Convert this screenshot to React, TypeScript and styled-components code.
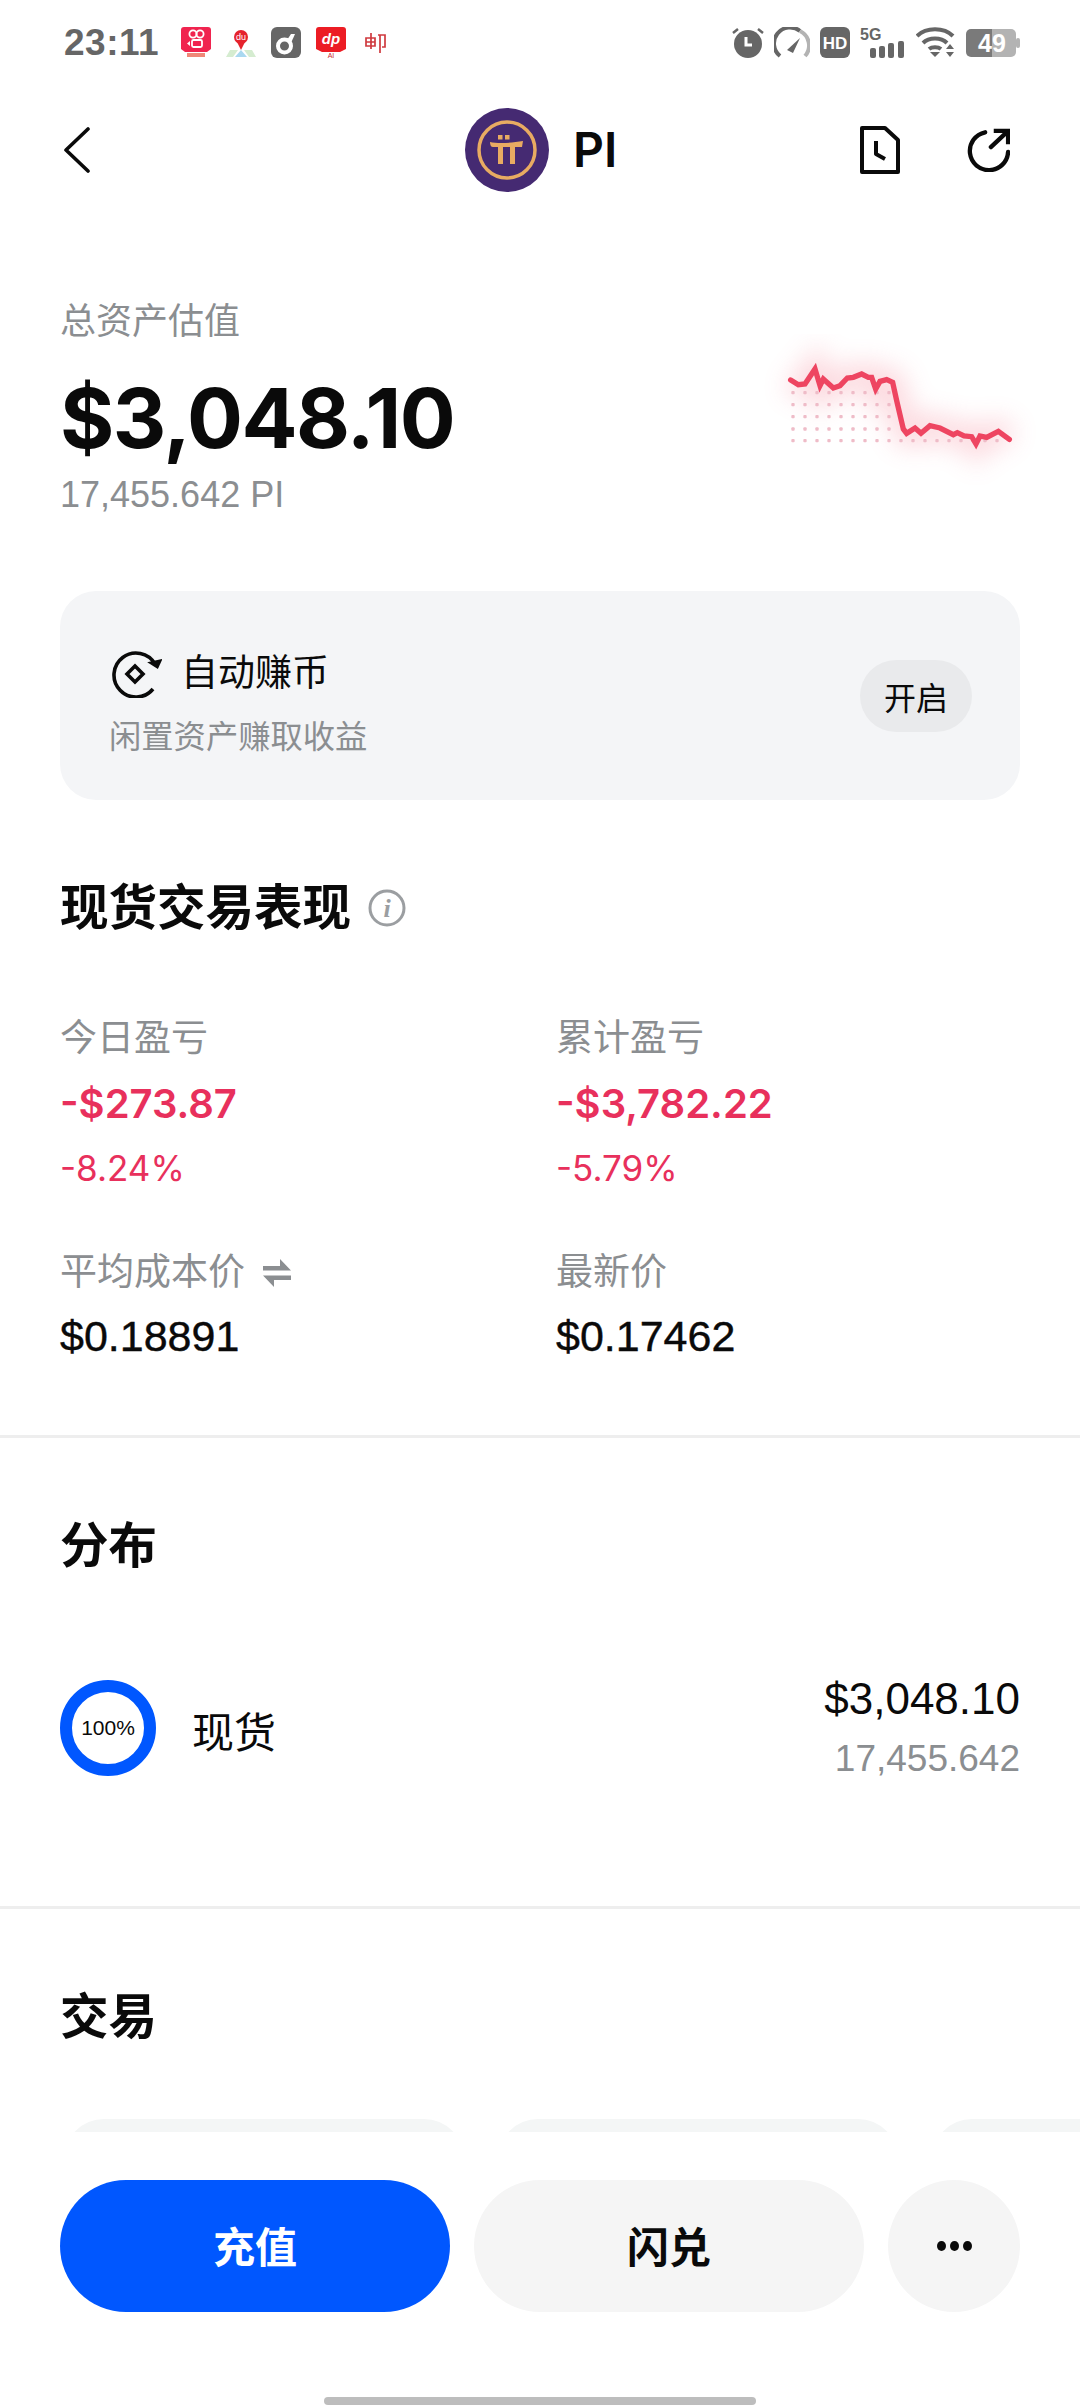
import styled, { createGlobalStyle } from "styled-components";

const GlobalStyle = createGlobalStyle`
  html, body {
    margin: 0;
    padding: 0;
    background: #fff;
  }
  * {
    box-sizing: border-box;
  }
`;

const CJK = `"Liberation Sans", "Noto Sans CJK SC", sans-serif`;
const LATIN = `Inter, "Noto Sans CJK SC", sans-serif`;

const Page = styled.div`
  width: 1080px;
  height: 2408px;
  display: flex;
  flex-direction: column;
  overflow: hidden;
  background: #fff;
  color: #0a0a0a;
  font-family: ${CJK};
`;

const Scroller = styled.div`
  flex: 1;
  min-height: 0;
  overflow: hidden;
`;

const StatusBar = styled.div`
  height: 84px;
  padding: 27px 60px 0 64px;
  display: flex;
  justify-content: space-between;
  align-items: flex-start;
`;

const StatusGroup = styled.div<{ $gap: number }>`
  display: flex;
  align-items: center;
  gap: ${(p) => p.$gap}px;
`;

const Clock = styled.span`
  font-size: 37px;
  line-height: 30px;
  font-weight: 700;
  color: #666;
  margin-right: 7px;
  letter-spacing: 0.5px;
`;

const MailIcon = styled.svg`
  margin-left: 4px;
`;

const NavBar = styled.div`
  height: 132px;
  padding: 0 70px 0 64px;
  display: flex;
  align-items: center;
  justify-content: space-between;
  position: relative;
`;

const NavTitle = styled.div`
  position: absolute;
  left: 465px;
  top: 24px;
  display: flex;
  align-items: center;
  gap: 24px;
  font-family: ${LATIN};
  font-size: 48px;
  line-height: 84px;
  font-weight: 600;
`;

const NavActions = styled.div`
  display: flex;
  align-items: center;
  gap: 66px;
`;

const Hero = styled.div`
  padding: 81px 40px 0 60px;
  display: flex;
  justify-content: space-between;
  align-items: flex-start;
`;

const HeroLabel = styled.div`
  font-size: 36px;
  line-height: 50px;
  color: #8b8e91;
`;

const HeroValue = styled.div`
  font-family: ${LATIN};
  font-size: 83px;
  line-height: 100px;
  font-weight: 700;
  letter-spacing: -1.5px;
  margin-top: 21px;
`;

const HeroSub = styled.div`
  font-size: 36px;
  line-height: 44px;
  color: #8b8e91;
  margin-top: 5px;
`;

const Spark = styled.svg`
  display: block;
  margin-top: 37px;
`;

const EarnCard = styled.div`
  margin: 74px 60px 0;
  height: 209px;
  padding: 0 48px 0 49px;
  border-radius: 36px;
  background: #f4f5f7;
  display: flex;
  align-items: center;
  justify-content: space-between;
`;

const EarnText = styled.div`
  margin-top: 16px;
`;

const EarnTitle = styled.div`
  display: flex;
  align-items: center;
  gap: 19px;
  margin-left: 3px;
  font-size: 37px;
  line-height: 50px;
`;

const EarnSub = styled.div`
  font-size: 32.300px;
  line-height: 44px;
  color: #8b8e91;
  margin-top: 16px;
`;

const PillButton = styled.div`
  width: 112px;
  height: 72px;
  border-radius: 36px;
  background: #e9eaec;
  display: flex;
  align-items: center;
  justify-content: center;
  font-size: 32px;
`;

const Section = styled.div<{ $top: number; $bottom?: number }>`
  padding: ${(p) => p.$top}px 60px ${(p) => p.$bottom ?? 0}px;
`;

const SectionTitle = styled.div`
  display: flex;
  align-items: center;
  gap: 17px;
  font-size: 48.500px;
  line-height: 68px;
  font-weight: 700;
`;

const StatGrid = styled.div`
  display: grid;
  grid-template-columns: 496px 1fr;
  row-gap: 58px;
  margin-top: 72px;
`;

const StatLabel = styled.div`
  display: flex;
  align-items: center;
  gap: 18px;
  font-size: 37px;
  line-height: 50px;
  color: #8b8e91;
`;

const StatValue = styled.div<{ $red?: boolean }>`
  font-family: ${(p) => (p.$red ? LATIN : CJK)};
  font-size: ${(p) => (p.$red ? 40 : 43)}px;
  line-height: 52px;
  margin-top: ${(p) => (p.$red ? 14 : 12)}px;
  font-weight: ${(p) => (p.$red ? 600 : 400)};
  color: ${(p) => (p.$red ? "#e8305c" : "#0a0a0a")};
  -webkit-text-stroke: ${(p) => (p.$red ? "0" : "0.4px")};
`;

const StatChange = styled.div`
  font-family: ${LATIN};
  font-size: 35px;
  line-height: 44px;
  margin-top: 16px;
  color: #e8305c;
`;

const Divider = styled.div`
  height: 3px;
  background: #eeeeee;
`;

const HoldingRow = styled.div`
  display: flex;
  align-items: center;
  margin-top: 93px;
`;

const Ring = styled.div`
  width: 96px;
  height: 96px;
  border-radius: 50%;
  border: 12px solid #0057ff;
  display: flex;
  align-items: center;
  justify-content: center;
  font-size: 21px;
`;

const HoldingName = styled.div`
  flex: 1;
  margin: 3px 0 0 36px;
  font-size: 42px;
`;

const HoldingAmounts = styled.div`
  text-align: right;
`;

const HoldingValue = styled.div`
  font-size: 44px;
  line-height: 52px;
`;

const HoldingSub = styled.div`
  font-size: 37px;
  line-height: 46px;
  margin-top: 11px;
  color: #8b8e91;
`;

const TradeRow = styled.div`
  display: flex;
  gap: 34px;
  padding-left: 64px;
  margin-top: 68px;
`;

const TradeCard = styled.div`
  flex: none;
  width: 400px;
  height: 200px;
  border-radius: 40px;
  background: #f4f6f6;
`;

const BottomBar = styled.div`
  flex: none;
  height: 276px;
  padding-top: 48px;
  background: #fff;
  display: flex;
  flex-direction: column;
  align-items: center;
`;

const Actions = styled.div`
  width: 960px;
  display: flex;
  gap: 24px;
`;

const ActionButton = styled.div<{ $primary?: boolean }>`
  flex: 1;
  height: 132px;
  padding-bottom: 4px;
  border-radius: 66px;
  display: flex;
  align-items: center;
  justify-content: center;
  font-size: 42px;
  font-weight: 700;
  background: ${(p) => (p.$primary ? "#0057ff" : "#f5f5f5")};
  color: ${(p) => (p.$primary ? "#fff" : "#0a0a0a")};
`;

const MoreButton = styled.div`
  flex: none;
  width: 132px;
  height: 132px;
  border-radius: 50%;
  background: #f5f5f5;
  display: flex;
  align-items: center;
  justify-content: center;
  gap: 4px;
`;

const Dot = styled.span`
  width: 9px;
  height: 10px;
  border-radius: 50%;
  background: #0a0a0a;
`;

const HomeIndicator = styled.div`
  width: 432px;
  height: 8px;
  border-radius: 4px;
  background: #bdbdbd;
  margin-top: 85px;
`;

const linePoints = [
  [152, 138], [175, 152], [195, 150], [225, 105], [240, 155], [250, 135], [280, 162],
  [300, 155], [322, 132], [340, 130], [365, 120], [385, 130], [395, 130], [407, 165],
  [420, 142], [440, 137], [458, 145], [470, 200], [490, 285], [500, 298], [525, 282],
  [543, 298], [570, 275], [600, 282], [640, 302], [652, 296], [672, 306], [695, 308],
  [708, 330], [720, 306], [740, 310], [775, 292], [808, 316],
]
  .map(([x, y]) => `${x},${y}`)
  .join(" ");

const dotRows = [176, 212, 248, 285, 320];

function Sparkline() {
  return (
    <Spark width="300" height="160" viewBox="0 0 900 480">
      <defs>
        <filter id="glow" x="-25%" y="-80%" width="150%" height="260%">
          <feGaussianBlur stdDeviation="38" />
        </filter>
      </defs>
      <polyline points={linePoints} fill="none" stroke="#f3697f" strokeWidth="70" opacity="0.26" filter="url(#glow)" />
      {dotRows.map((y) => {
        const count = y === 320 ? 18 : 9;
        return Array.from({ length: count }, (_, i) => (
          <rect key={`${y}-${i}`} x={154 + i * 36} y={y - 5} width="10" height="10" rx="3" fill="#efbcc8" />
        ));
      })}
      <polyline points={linePoints} fill="none" stroke="#ee4561" strokeWidth="16" strokeLinejoin="miter" strokeLinecap="round" />
    </Spark>
  );
}

function LeftStatusIcons() {
  return (
    <>
      <svg width="30" height="31" viewBox="0 0 30 31">
        <path d="M3 0h24a3 3 0 0 1 3 3v19l-4 3H4l-4-3V3a3 3 0 0 1 3-3z" fill="#f0244f" />
        <circle cx="12" cy="7" r="3.600" fill="none" stroke="#fff" strokeWidth="1.800" />
        <circle cx="19" cy="7" r="3.600" fill="none" stroke="#fff" strokeWidth="1.800" />
        <rect x="11" y="13" width="10" height="7" rx="1.500" fill="none" stroke="#fff" strokeWidth="1.800" />
        <path d="M9 14l-3 2.500 3 2.500z" fill="#fff" />
        <rect x="6" y="26" width="18" height="4" fill="#e9543f" opacity="0.7" />
      </svg>
      <svg width="30" height="31" viewBox="0 0 30 31">
        <path d="M0 30l4-7h8l-5 7zM23 30l-5-7h8l4 7z" fill="#d5ecd0" />
        <path d="M9 30l6-7 6 7z" fill="#a9d8f0" />
        <circle cx="15" cy="10" r="7" fill="#e5232d" />
        <path d="M11 15l4 8 4-8z" fill="#e5232d" />
        <text x="15" y="13" textAnchor="middle" fontSize="9" fill="#fff" fontFamily="Liberation Sans">du</text>
      </svg>
      <svg width="30" height="31" viewBox="0 0 30 31">
        <rect width="30" height="31" rx="6" fill="#666" />
        <circle cx="13.500" cy="19" r="6.500" fill="none" stroke="#fff" strokeWidth="4" />
        <path d="M16 13l4-6h4l-4 9z" fill="#fff" />
      </svg>
      <svg width="30" height="31" viewBox="0 0 30 31">
        <path d="M3 0h24a3 3 0 0 1 3 3v19l-6 3H6l-6-3V3a3 3 0 0 1 3-3z" fill="#ec1c24" />
        <text x="15" y="17" textAnchor="middle" fontSize="15" fontWeight="700" fontStyle="italic" fill="#fff" fontFamily="Liberation Sans">dp</text>
        <text x="15" y="31" textAnchor="middle" fontSize="7" fill="#c8262c" fontFamily="Liberation Sans">AI</text>
      </svg>
      <MailIcon width="22" height="22" viewBox="0 0 22 22" fill="none" stroke="#cf3a3f" strokeWidth="1.700">
        <path d="M6 1v16M1 6h9v8H1zM1 10h9M13 3h7v12h-3M15 3v18" />
      </MailIcon>
    </>
  );
}

function RightStatusIcons() {
  return (
    <>
      <svg width="32" height="31" viewBox="0 0 32 31">
        <circle cx="16" cy="17" r="14" fill="#666" />
        <path d="M14 10v8h6" fill="none" stroke="#fff" strokeWidth="3" />
        <path d="M1 6l5-4M31 6l-5-4" stroke="#666" strokeWidth="2.500" />
      </svg>
      <svg width="36" height="31" viewBox="0 0 36 31" fill="none">
        <path d="M6 29A16 16 0 0 1 26 4" stroke="#666" strokeWidth="4" />
        <path d="M26 4A16 16 0 0 1 31 29" stroke="#b3b3b3" strokeWidth="4" />
        <path d="M13 23l13-12-7 15z" fill="#666" />
      </svg>
      <svg width="30" height="31" viewBox="0 0 30 31">
        <rect width="30" height="31" rx="6" fill="#666" />
        <text x="15" y="22" textAnchor="middle" fontSize="17" fontWeight="700" fill="#fff" fontFamily="Liberation Sans">HD</text>
      </svg>
      <svg width="46" height="31" viewBox="0 0 46 31">
        <text x="0" y="13" fontSize="16" fontWeight="700" fill="#666" fontFamily="Liberation Sans">5G</text>
        <rect x="10" y="21" width="6" height="10" rx="2" fill="#666" />
        <rect x="19" y="19" width="6" height="12" rx="2" fill="#666" />
        <rect x="28" y="16" width="6" height="15" rx="2" fill="#666" />
        <rect x="38" y="14" width="6" height="17" rx="2" fill="#666" />
      </svg>
      <svg width="40" height="31" viewBox="0 0 40 31" fill="none" stroke="#666" strokeWidth="4">
        <path d="M1 9C10 0 28 0 37 9" />
        <path d="M7 16c6-6 18-6 24 0" />
        <path d="M13 22c3-2.500 9-2.500 12 0" />
        <path d="M14 25h10l-5 5z" fill="#666" stroke="none" />
        <path d="M30 22l4-5 4 5zM30 25h8l-4 5z" fill="#666" stroke="none" />
      </svg>
      <svg width="54" height="28" viewBox="0 0 54 28">
        <path d="M5 0h21v28H5a5 5 0 0 1-5-5V5a5 5 0 0 1 5-5z" fill="#7a7a7a" />
        <path d="M26 0h19a5 5 0 0 1 5 5v18a5 5 0 0 1-5 5H26z" fill="#b3b3b3" />
        <rect x="50" y="9" width="4" height="10" rx="2" fill="#b3b3b3" />
        <text x="26" y="23" textAnchor="middle" fontSize="25" fontWeight="700" fill="#fff" fontFamily="Liberation Sans">49</text>
      </svg>
    </>
  );
}

function PiLogo() {
  return (
    <svg width="84" height="84" viewBox="0 0 84 84">
      <circle cx="42" cy="42" r="42" fill="#452a72" />
      <circle cx="42" cy="42" r="28" fill="none" stroke="#e8ab62" strokeWidth="3.500" />
      <path d="M25 34c8 2 22 1 33-1l-1 6H50v17h-5V39h-7v17h-5V39h-5c-2 0-3-2-3-5z" fill="#e8ab62" />
      <rect x="33" y="27" width="4.500" height="4.500" fill="#e8ab62" />
      <rect x="40" y="27" width="4.500" height="4.500" fill="#e8ab62" />
    </svg>
  );
}

function EarnIcon() {
  return (
    <svg width="50" height="48" viewBox="0 0 50 48" fill="none" stroke="#0a0a0a" strokeWidth="3.600">
      <path d="M43 14A22 22 0 1 0 41 39" />
      <path d="M35 14l12 4 2-11z" fill="#0a0a0a" stroke="none" transform="rotate(14 42 14)" />
      <path d="M23 16l8 8-8 8-8-8z" />
    </svg>
  );
}

function InfoIcon() {
  return (
    <svg width="38" height="38" viewBox="0 0 38 38" fill="none">
      <circle cx="19" cy="19" r="17" stroke="#9b9ea1" strokeWidth="3" />
      <text x="19" y="28" textAnchor="middle" fontSize="26" fontStyle="italic" fontFamily="Liberation Serif" fill="#9b9ea1">i</text>
    </svg>
  );
}

function SwapIcon() {
  return (
    <svg width="28" height="28" viewBox="0 0 28 28" fill="#8b8e91">
      <path d="M17 0l11 11.500H0V7h17z" />
      <path d="M11 28L0 16.500h28V21H11z" />
    </svg>
  );
}

export default function App() {
  return (
    <Page>
      <GlobalStyle />
      <Scroller>
        <StatusBar>
          <StatusGroup $gap={15}>
            <Clock>23:11</Clock>
            <LeftStatusIcons />
          </StatusGroup>
          <StatusGroup $gap={10}>
            <RightStatusIcons />
          </StatusGroup>
        </StatusBar>

        <NavBar>
          <svg width="26" height="46" viewBox="0 0 26 46" fill="none" stroke="#0a0a0a" strokeWidth="3.600" strokeLinecap="round" strokeLinejoin="round">
            <path d="M24 2L2 23l22 21" />
          </svg>
          <NavTitle>
            <PiLogo />
            PI
          </NavTitle>
          <NavActions>
            <svg width="40" height="48" viewBox="0 0 40 48" fill="none" stroke="#0a0a0a" strokeWidth="4" strokeLinejoin="round">
              <path d="M2 2h23l13 12v32H2z" />
              <path d="M16 15v13l9 5" strokeWidth="4" />
            </svg>
            <svg width="44" height="44" viewBox="0 0 46 46" fill="none" stroke="#0a0a0a" strokeWidth="4.500" strokeLinecap="round">
              <path d="M20 4.500A20 20 0 1 0 44 25" />
              <path d="M26 20L43 4" />
              <path d="M29 3h15v14" strokeLinecap="butt" />
            </svg>
          </NavActions>
        </NavBar>

        <Hero>
          <div>
            <HeroLabel>总资产估值</HeroLabel>
            <HeroValue>$3,048.10</HeroValue>
            <HeroSub>17,455.642 PI</HeroSub>
          </div>
          <Sparkline />
        </Hero>

        <EarnCard>
          <EarnText>
            <EarnTitle>
              <EarnIcon />
              自动赚币
            </EarnTitle>
            <EarnSub>闲置资产赚取收益</EarnSub>
          </EarnText>
          <PillButton>开启</PillButton>
        </EarnCard>

        <Section $top={74} $bottom={73}>
          <SectionTitle>
            现货交易表现
            <InfoIcon />
          </SectionTitle>
          <StatGrid>
            <div>
              <StatLabel>今日盈亏</StatLabel>
              <StatValue $red>-$273.87</StatValue>
              <StatChange>-8.24%</StatChange>
            </div>
            <div>
              <StatLabel>累计盈亏</StatLabel>
              <StatValue $red>-$3,782.22</StatValue>
              <StatChange>-5.79%</StatChange>
            </div>
            <div>
              <StatLabel>
                平均成本价
                <SwapIcon />
              </StatLabel>
              <StatValue>$0.18891</StatValue>
            </div>
            <div>
              <StatLabel>最新价</StatLabel>
              <StatValue>$0.17462</StatValue>
            </div>
          </StatGrid>
        </Section>

        <Divider />

        <Section $top={74} $bottom={124}>
          <SectionTitle>分布</SectionTitle>
          <HoldingRow>
            <Ring>100%</Ring>
            <HoldingName>现货</HoldingName>
            <HoldingAmounts>
              <HoldingValue>$3,048.10</HoldingValue>
              <HoldingSub>17,455.642</HoldingSub>
            </HoldingAmounts>
          </HoldingRow>
        </Section>

        <Divider />

        <Section $top={74}>
          <SectionTitle>交易</SectionTitle>
        </Section>
        <TradeRow>
          <TradeCard />
          <TradeCard />
          <TradeCard />
        </TradeRow>
      </Scroller>

      <BottomBar>
        <Actions>
          <ActionButton $primary>充值</ActionButton>
          <ActionButton>闪兑</ActionButton>
          <MoreButton>
            <Dot />
            <Dot />
            <Dot />
          </MoreButton>
        </Actions>
        <HomeIndicator />
      </BottomBar>
    </Page>
  );
}
